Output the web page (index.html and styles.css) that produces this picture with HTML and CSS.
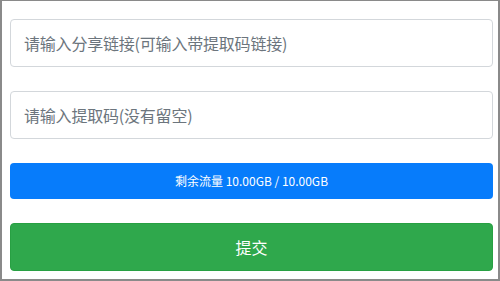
FILE: index.html
```html
<!DOCTYPE html>
<html lang="zh-CN">
<head>
	<meta charset="UTF-8">
	<title>解析</title>
	<link rel="stylesheet" href="styles.css">
</head>
<body>
	<div class="frame">
		<form class="parse-form" onsubmit="return false">
			<input class="form-input" type="text" placeholder="请输入分享链接(可输入带提取码链接)">
			<input class="form-input" type="text" placeholder="请输入提取码(没有留空)">
			<div class="quota">剩余流量 10.00GB / 10.00GB</div>
			<button class="btn-submit" type="submit">提交</button>
		</form>
	</div>
</body>
</html>
```

FILE: styles.css
```css
*{margin: 0;padding: 0;box-sizing: border-box;}
html,body{width: 100%;height: 100%;}
body{font-family: "Noto Sans CJK SC","Microsoft YaHei",sans-serif;background: #fff;}

.frame{width: 500px;height: 281px;border-style: solid;border-color: #8a8a8a;border-width: 1px 2px 2px 2px;padding: 18px 5px 0 8px;}
.parse-form{display: flex;flex-direction: column;gap: 24px;}

.form-input{display: block;width: 100%;height: 48px;padding: 0 13px;border: 1px solid #d3d7db;border-radius: 4px;font-family: inherit;font-size: 16px;letter-spacing: -0.2px;color: #495057;background: #fff;outline: none;}
.form-input::placeholder{color: #6c757d;}

.quota{height: 36px;line-height: 36px;text-align: center;font-size: 12px;color: #fff;background-color: #077cfb;border-radius: 4px;}

.btn-submit{height: 48px;border: 1px solid #28a043;border-radius: 4px;background-color: #2fa84c;color: #fff;font-family: inherit;font-size: 16px;cursor: pointer;}
```
